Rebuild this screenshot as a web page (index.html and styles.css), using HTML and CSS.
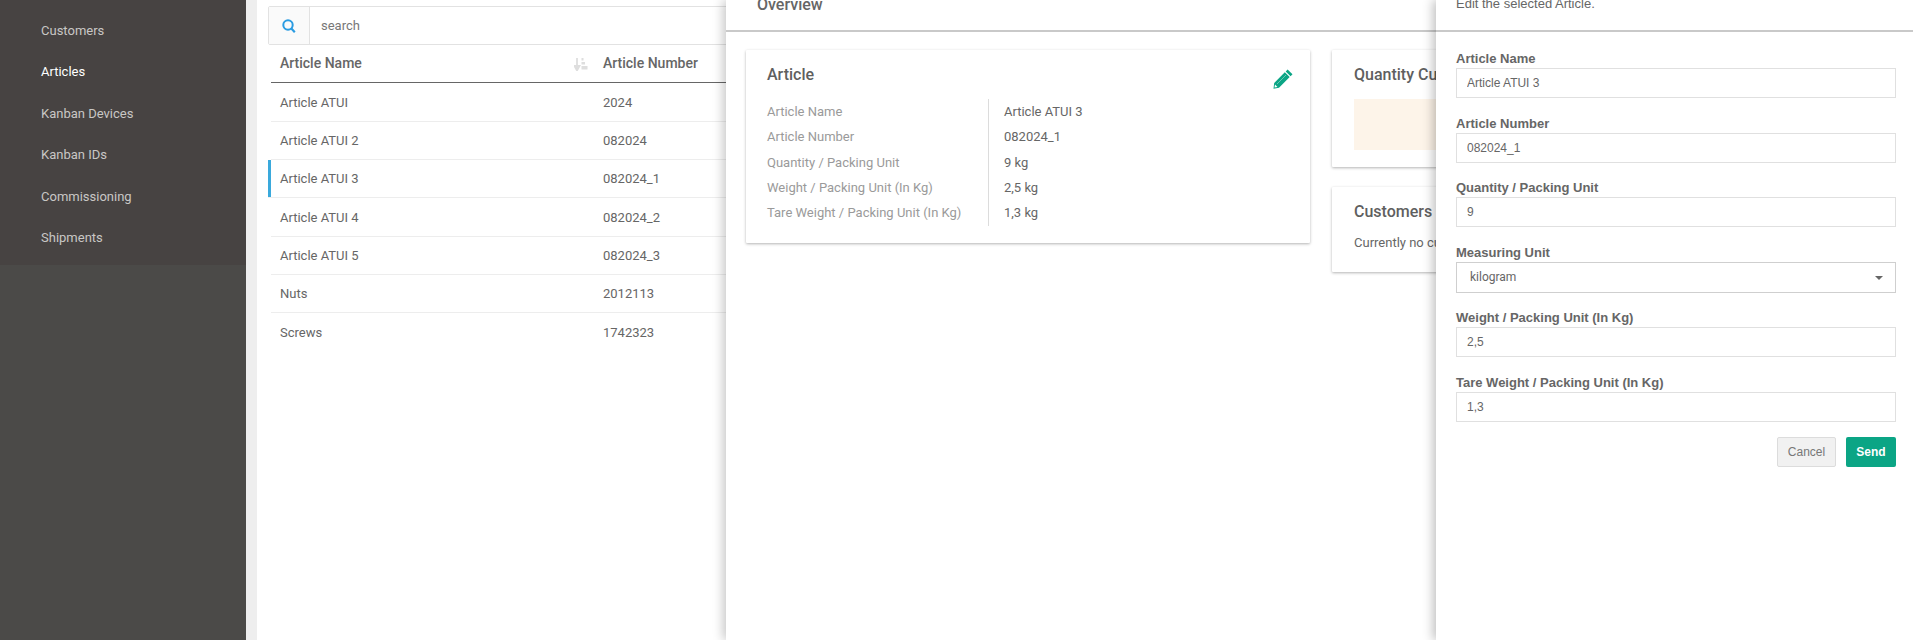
FILE: index.html
```html
<!DOCTYPE html>
<html lang="en">
<head>
<meta charset="utf-8">
<title>Articles</title>
<link rel="stylesheet" href="styles.css">
</head>
<body>
<div class="app">
  <nav class="sidebar">
    <ul class="nav-list">
      <li class="nav-item">Customers</li>
      <li class="nav-item active">Articles</li>
      <li class="nav-item">Kanban Devices</li>
      <li class="nav-item">Kanban IDs</li>
      <li class="nav-item">Commissioning</li>
      <li class="nav-item">Shipments</li>
    </ul>
  </nav>
  <main class="content">
    <div class="search">
      <span class="search-addon">
        <svg class="search-icon" viewBox="0 0 14 14" width="14" height="14"><circle cx="6" cy="6" r="4.7" fill="none" stroke="#2b9ce2" stroke-width="2"/><path d="M9.400 9.600 12.800 13.200" fill="none" stroke="#2b9ce2" stroke-width="2.200"/></svg>
      </span>
      <span class="search-text">search</span>
    </div>
    <div class="table">
      <div class="row head">
        <div class="cell name">Article Name
          <svg class="sort-icon" viewBox="0 0 14 14" width="14" height="14"><path d="M3 1v9M0.500 9 3 13.500 5.500 9z" fill="#dedede" stroke="#dedede" stroke-width="1.800"/><rect x="7.500" y="1" width="2" height="2.500" fill="#dedede"/><rect x="7.500" y="5" width="3.500" height="2.500" fill="#dedede"/><rect x="7.500" y="9" width="6" height="3.500" fill="#dedede"/></svg>
        </div>
        <div class="cell">Article Number</div>
      </div>
      <div class="row"><div class="cell name">Article ATUI</div><div class="cell">2024</div></div>
      <div class="row"><div class="cell name">Article ATUI 2</div><div class="cell">082024</div></div>
      <div class="row selected"><div class="cell name">Article ATUI 3</div><div class="cell">082024_1</div></div>
      <div class="row"><div class="cell name">Article ATUI 4</div><div class="cell">082024_2</div></div>
      <div class="row"><div class="cell name">Article ATUI 5</div><div class="cell">082024_3</div></div>
      <div class="row"><div class="cell name">Nuts</div><div class="cell">2012113</div></div>
      <div class="row last"><div class="cell name">Screws</div><div class="cell">1742323</div></div>
    </div>
  </main>
</div>

<section class="overview">
  <header class="overview-head">Overview</header>
  <div class="overview-body">
    <article class="card card-main">
      <div class="card-title-row">
        <h2 class="card-title">Article</h2>
        <svg class="pencil" viewBox="0 0 20 20" width="20" height="20"><path d="M14.600 0.500 19.500 5.300 17.600 7.200 12.700 2.400zM11.800 3.300 16.700 8.100 6 18.800 0.500 19.700 1.200 14z" fill="#0ba585"/><path d="M13 6 4 15" stroke="#7fd2c0" stroke-width="0.800"/><path d="M2 15.500 4.500 18 1.500 18.500z" fill="#fff"/></svg>
      </div>
      <div class="details">
        <dl class="detail-col labels">
          <dt>Article Name</dt>
          <dt>Article Number</dt>
          <dt>Quantity / Packing Unit</dt>
          <dt>Weight / Packing Unit (In Kg)</dt>
          <dt>Tare Weight / Packing Unit (In Kg)</dt>
        </dl>
        <dl class="detail-col values">
          <dd>Article ATUI 3</dd>
          <dd>082024_1</dd>
          <dd>9 kg</dd>
          <dd>2,5 kg</dd>
          <dd>1,3 kg</dd>
        </dl>
      </div>
    </article>
    <div class="side-cards">
      <article class="card card-quantity">
        <h2 class="card-title">Quantity Customers</h2>
        <div class="quantity-box"></div>
      </article>
      <article class="card card-customers">
        <h2 class="card-title">Customers</h2>
        <p class="card-text">Currently no customers</p>
      </article>
    </div>
  </div>
</section>

<section class="edit">
  <header class="edit-head">Edit the selected Article.</header>
  <form class="edit-form">
    <label class="field"><span class="field-label">Article Name</span><input class="input" value="Article ATUI 3"></label>
    <label class="field"><span class="field-label">Article Number</span><input class="input" value="082024_1"></label>
    <label class="field"><span class="field-label">Quantity / Packing Unit</span><input class="input" value="9"></label>
    <label class="field"><span class="field-label">Measuring Unit</span>
      <span class="select-wrap"><select class="select"><option>kilogram</option></select></span>
    </label>
    <label class="field"><span class="field-label">Weight / Packing Unit (In Kg)</span><input class="input" value="2,5"></label>
    <label class="field"><span class="field-label">Tare Weight / Packing Unit (In Kg)</span><input class="input" value="1,3"></label>
    <div class="actions">
      <button type="button" class="btn btn-cancel">Cancel</button>
      <button type="button" class="btn btn-send">Send</button>
    </div>
  </form>
</section>
</body>
</html>
```
FILE: styles.css
```css
* { box-sizing: border-box; }
html, body { margin: 0; height: 640px; overflow: hidden; background: #fff; }
body { font-family: Roboto, "Liberation Sans", sans-serif; font-size: 13px; color: #666; }

.app { display: flex; height: 640px; }

.sidebar { width: 246px; flex: none; background: #4b4a48; }
.nav-list { list-style: none; margin: 0; padding: 10px 0 7px; background: #474342; height: 265px; }
.nav-item { height: 41.4px; line-height: 41.4px; padding-left: 41px; color: #c9c7c5; font-size: 13px; }
.nav-item.active { color: #fff; }

.content { flex: 1; margin-left: 11px; padding: 6px 0 0 11px; background: #fff; position: relative; box-shadow: -11px 0 0 #eeeeee; min-width: 0; }

.search { display: flex; height: 39px; border: 1px solid #e2e2e2; border-radius: 2px; }
.search-addon { width: 41px; flex: none; display: flex; align-items: center; justify-content: center; background: #fafafa; border-right: 1px solid #e2e2e2; }
.search-text { padding-left: 11px; line-height: 37px; color: #777; font-size: 13px; }

.row { display: flex; align-items: center; height: 38.35px; margin-left: 3px; border-bottom: 1px solid #ededed; }
.row.head { height: 38.4px; padding-bottom: 2px; border-bottom: 1px solid #666; font-size: 14px; font-weight: 500; }
.row.last { border-bottom: 0; }
.row.selected { margin-left: 0; padding-left: 3px; box-shadow: inset 3px 0 0 #3aa9dc; }
.cell { padding-left: 9px; color: #666; }
.cell.name { width: 323px; position: relative; flex: none; }
.sort-icon { position: absolute; right: 6px; top: 2px; }

.overview { position: absolute; left: 726px; top: 0; width: 710px; height: 640px; background: #fff; box-shadow: -3px 0 10px rgba(0,0,0,.22); }
.overview-head { height: 32px; padding: 0 0 0 31px; font-size: 16px; line-height: 10px; font-weight: 500; color: #666; border-bottom: 2px solid #c9c9c9; }
.overview-body { display: flex; padding: 18px 0 0 20px; gap: 22px; }

.card { background: #fff; box-shadow: 0 1px 3px rgba(0,0,0,.3); border-radius: 1px; }
.card-main { width: 564px; height: 193px; flex: none; padding: 16px 21px 0; }
.card-title-row { display: flex; justify-content: space-between; }
.card-title { margin: 0; font-size: 16px; font-weight: 500; color: #5f5f5f; line-height: 18px; white-space: nowrap; }
.pencil { margin: 3px -4px 0 0; }

.details { display: flex; margin-top: 10px; }
.detail-col { margin: 0; }
.detail-col dt, .detail-col dd { margin: 0; height: 25.3px; line-height: 25.3px; white-space: nowrap; }
.labels { width: 222px; height: 127px; border-right: 1px solid #dcdcdc; color: #9a9a9a; }
.values { padding-left: 15px; color: #666; }

.side-cards { display: flex; flex-direction: column; gap: 20px; flex: none; width: 300px; }
.card-quantity { height: 117px; padding: 16px 22px 0; }
.quantity-box { height: 51px; margin-top: 15px; background: #fdf4e9; }
.card-customers { height: 85px; padding: 16px 22px 0; }
.card-text { margin: 14px 0 0; white-space: nowrap; }

.edit { position: absolute; left: 1436px; top: 0; width: 477px; height: 640px; background: #fff; box-shadow: -3px 0 10px rgba(0,0,0,.25); font-family: "Liberation Sans", Arial, sans-serif; }
.edit-head { height: 32px; padding-left: 20px; font-size: 13px; line-height: 8px; color: #666; border-bottom: 2px solid #c9c9c9; }
.edit-form { padding: 18px 17px 0 20px; display: flex; flex-direction: column; gap: 16.5px; }

.field { display: block; }
.field-label { display: block; height: 18px; line-height: 18px; font-size: 13px; font-weight: 700; color: #666; }
.input { display: block; width: 100%; height: 30px; border: 1px solid #e0e0e0; padding: 0 10px; font: 12px "Liberation Sans", Arial, sans-serif; color: #666; background: #fff; border-radius: 0; outline: 0; }
.select-wrap { display: block; position: relative; }
.select-wrap::after { content: ""; position: absolute; right: 13px; top: 14px; border: 4px solid transparent; border-top: 4px solid #666; border-bottom: 0; }
.select { display: block; width: 100%; height: 31px; border: 1px solid #cfcfcf; padding: 0 13px; font: 12px Roboto, sans-serif; color: #666; background: #fff; appearance: none; border-radius: 0; }

.actions { display: flex; justify-content: flex-end; gap: 10px; margin-top: -1.5px; }
.btn { height: 30px; border-radius: 2px; font: 12px "Liberation Sans", Arial, sans-serif; padding: 0; }
.btn-cancel { width: 59px; border: 1px solid #dcdcdc; background: #f1f1f1; color: #777; }
.btn-send { width: 50px; border: 0; background: #0ba585; color: #fff; font-weight: 700; }
```
